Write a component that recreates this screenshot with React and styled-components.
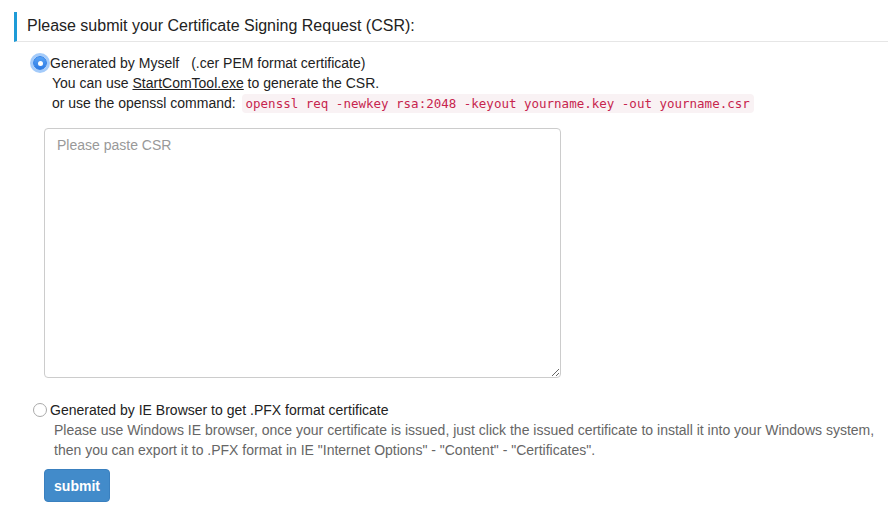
import React from 'react';
import styled, { createGlobalStyle } from 'styled-components';

const Global = createGlobalStyle`
  body {
    margin: 0;
    background: #fff;
    font-family: "Liberation Sans", Arial, sans-serif;
    font-size: 14px;
    color: #333;
  }
`;

const Page = styled.div`
  padding: 12px 0 0 14px;
`;

const Heading = styled.h3`
  margin: 0;
  font-weight: normal;
  font-size: 16px;
  line-height: 20px;
  color: #222;
  border-left: 3px solid #1e9bd7;
  border-bottom: 1px solid #e6e6e6;
  padding: 4px 0 5px 10px;
`;

const Option = styled.div`
  margin: ${p => p.$top}px 0 0 19px;
`;

const RadioRow = styled.label`
  display: flex;
  align-items: center;
  line-height: 20px;
  color: #222;
  cursor: pointer;
`;

const Radio = styled.span`
  box-sizing: border-box;
  width: 14px;
  height: 14px;
  border-radius: 50%;
  margin-right: 3px;
  flex-shrink: 0;
  display: flex;
  align-items: center;
  justify-content: center;
  border: 1px solid ${p => (p.$checked ? '#2f7fe6' : '#aaa')};
  background: ${p => (p.$checked ? 'linear-gradient(#5aa4f5, #2b7ae4)' : '#fff')};
  box-shadow: ${p => (p.$checked ? '0 0 0 3px rgba(90, 160, 245, 0.55)' : 'none')};
  &::after {
    content: '';
    display: ${p => (p.$checked ? 'block' : 'none')};
    width: 5px;
    height: 5px;
    border-radius: 50%;
    background: #fff;
  }
`;

const Gap = styled.span`
  display: inline-block;
  width: ${p => p.$w}px;
`;

const Line = styled.div`
  line-height: 20px;
  padding-left: ${p => p.$indent || 19}px;
  color: ${p => p.$muted ? '#666' : '#222'};
`;

const Link = styled.a`
  color: #222;
  text-decoration: underline;
`;

const Code = styled.code`
  font-family: "DejaVu Sans Mono", "Liberation Mono", monospace;
  font-size: 12.5px;
  color: #c7254e;
  background: #f9f2f4;
  border-radius: 4px;
  padding: 2px 4px;
  margin-left: 2px;
`;

const Area = styled.textarea`
  display: block;
  box-sizing: border-box;
  width: 517px;
  height: 250px;
  margin: 14px 0 0 30px;
  padding: 6px 12px;
  border: 1px solid #ccc;
  border-radius: 4px;
  font-family: "Liberation Sans", Arial, sans-serif;
  font-size: 14px;
  line-height: 20px;
  color: #333;
  resize: both;
  &::placeholder {
    color: #999;
  }
`;

const Button = styled.button`
  margin: 9px 0 0 30px;
  width: 66px;
  height: 33px;
  border: 1px solid #3a80bf;
  border-radius: 4px;
  background: #428bca;
  color: #fff;
  font-family: "Liberation Sans", Arial, sans-serif;
  font-size: 14px;
  font-weight: bold;
  cursor: pointer;
`;

export default function App() {
  return (
    <Page>
      <Global />
      <Heading>Please submit your Certificate Signing Request (CSR):</Heading>

      <Option $top={11}>
        <RadioRow>
          <Radio $checked />
          Generated by Myself<Gap $w={12} />(.cer PEM format certificate)
        </RadioRow>
        <Line>
          You can use <Link href="#">StartComTool.exe</Link> to generate the CSR.
        </Line>
        <Line>
          or use the openssl command:{' '}
          <Code>openssl req -newkey rsa:2048 -keyout yourname.key -out yourname.csr</Code>
        </Line>
      </Option>

      <Area placeholder="Please paste CSR" />

      <Option $top={22}>
        <RadioRow>
          <Radio />
          Generated by IE Browser to get .PFX format certificate
        </RadioRow>
        <Line $muted $indent={21}>
          Please use Windows IE browser, once your certificate is issued, just click the issued certificate to install it into your Windows system,
          <br />
          then you can export it to .PFX format in IE "Internet Options" - "Content" - "Certificates".
        </Line>
      </Option>

      <Button>submit</Button>
    </Page>
  );
}
